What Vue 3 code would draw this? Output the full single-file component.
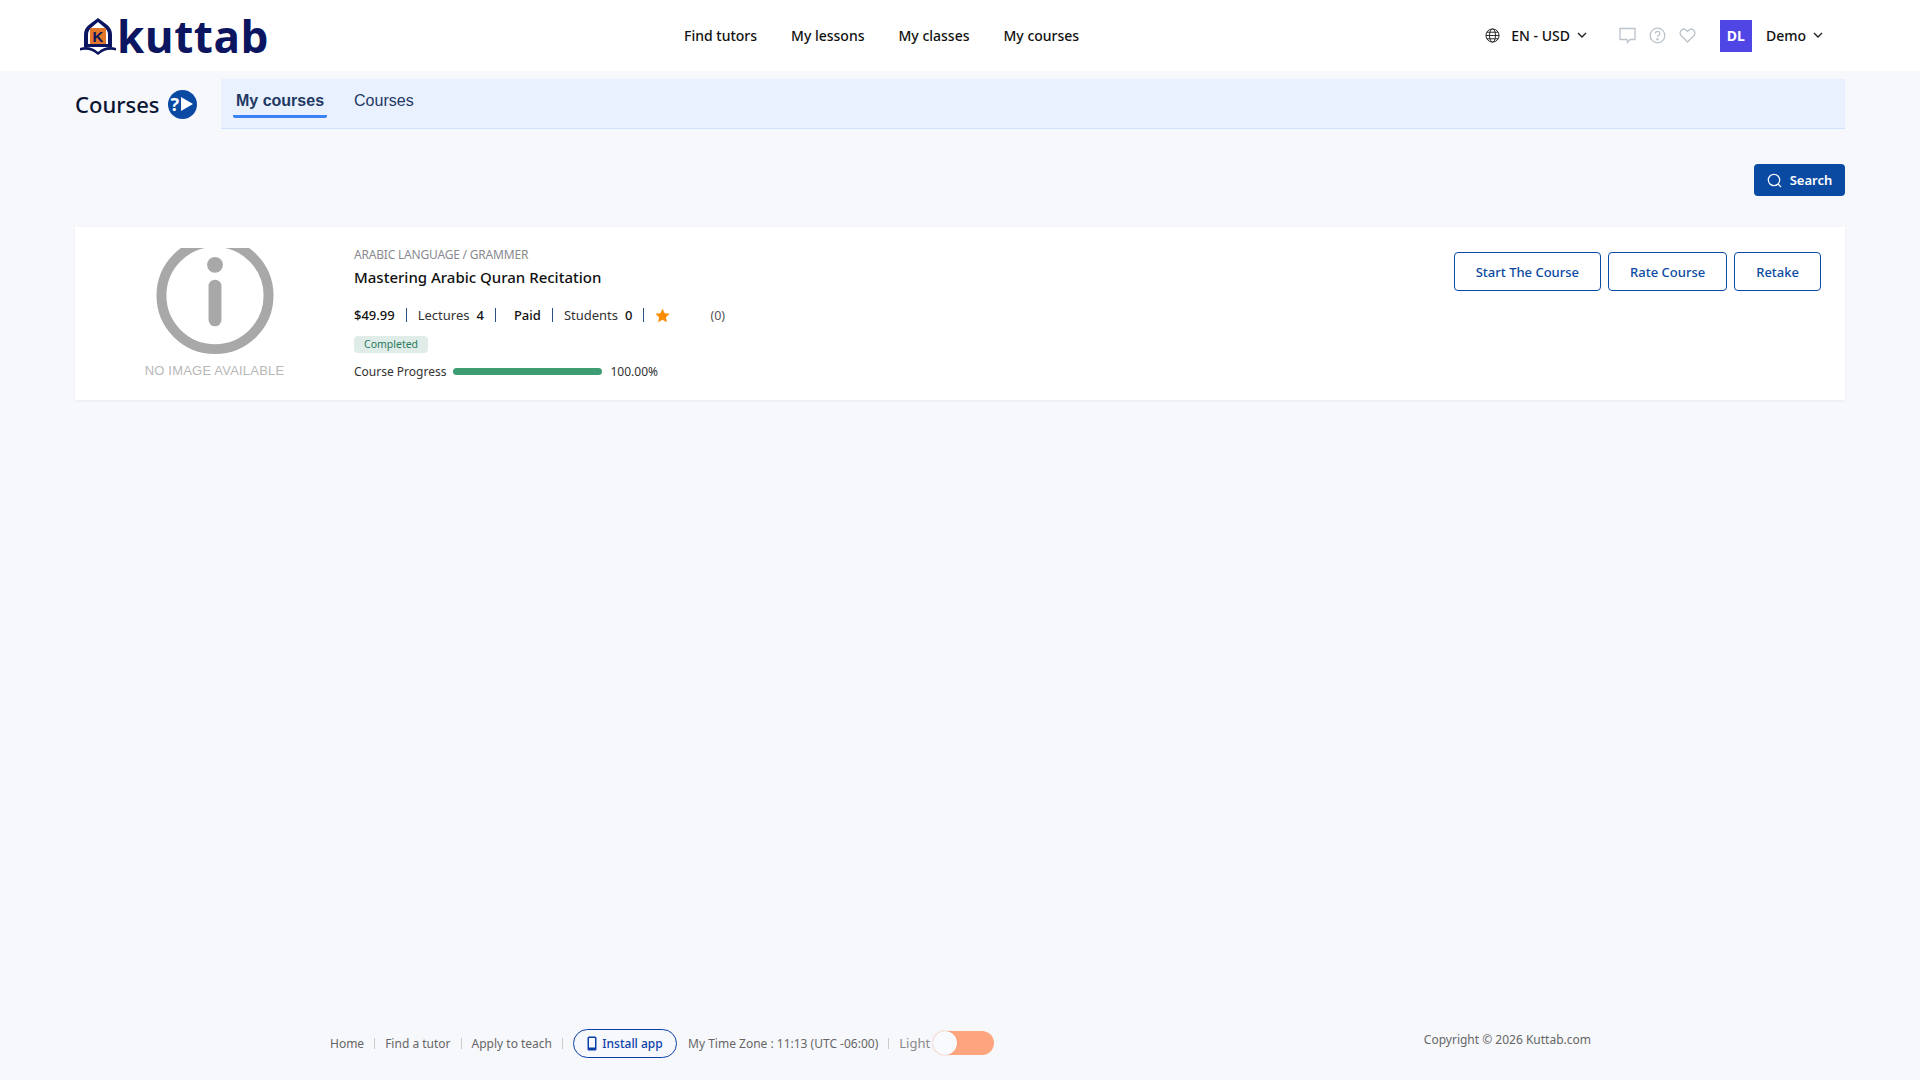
<template>
  <div class="page">
    <header class="topbar">
      <a class="logo">
        <svg width="40" height="40" viewBox="0 0 40 40">
          <path d="M20 2 L28 8 Q34 12 34 19 L34 31 L6 31 L6 19 Q6 12 12 8 Z" fill="#0b1560" />
          <path d="M20 6 L26 11 Q30 14 30 19 L30 28 L10 28 L10 19 Q10 14 14 11 Z" fill="#fff" />
          <rect x="12" y="12" width="16" height="16" fill="#e2772b" />
          <text x="20" y="26" text-anchor="middle" class="logo-k">K</text>
          <path d="M2 32 Q12 29 20 36 Q28 29 38 32 L38 34.5 Q28 32 20 39 Q12 32 2 34.5 Z" fill="#0b1560" />
        </svg>
        <span class="logo-text">kuttab</span>
      </a>
      <nav class="nav">
        <a>Find tutors</a>
        <a>My lessons</a>
        <a>My classes</a>
        <a>My courses</a>
      </nav>
      <div class="right">
        <svg class="globe" width="15" height="15" viewBox="0 0 16 16" fill="none" stroke="#222" stroke-width="1">
          <circle cx="8" cy="8" r="7" />
          <ellipse cx="8" cy="8" rx="3.2" ry="7" />
          <path d="M1 8h14M2 4.5h12M2 11.5h12" />
        </svg>
        <span class="lang">EN - USD</span>
        <svg class="chev" width="10" height="7" viewBox="0 0 10 7" fill="none" stroke="#222" stroke-width="1.4"><path d="M1 1l4 4 4-4" /></svg>
        <div class="icons">
          <svg width="17" height="17" viewBox="0 0 17 17" fill="none" stroke="#bcc3ca" stroke-width="1.3"><path d="M1 1.5h15v11h-5l-2.5 3-.5-3H1z" /></svg>
          <svg width="17" height="17" viewBox="0 0 17 17" fill="none" stroke="#bcc3ca" stroke-width="1.3">
            <circle cx="8.5" cy="8.5" r="7.3" />
            <path d="M6.3 6.6c0-3 4.5-3 4.5-.2 0 1.800-2.300 1.700-2.300 3.600" />
            <circle cx="8.5" cy="12.300" r=".6" />
          </svg>
          <svg width="17" height="17" viewBox="0 0 17 17" fill="none" stroke="#bcc3ca" stroke-width="1.3"><path d="M8.500 15L2 8.500C-.5 5 3.500 .5 6.500 2.700L8.500 4.300l2-1.600C13.500 .5 17.500 5 15 8.500z" /></svg>
        </div>
        <div class="avatar">DL</div>
        <span class="user">Demo</span>
        <svg class="chev" width="10" height="7" viewBox="0 0 10 7" fill="none" stroke="#222" stroke-width="1.4"><path d="M1 1l4 4 4-4" /></svg>
      </div>
    </header>

    <section class="subhead">
      <div class="title">
        <h1>Courses</h1>
        <span class="help">
          <span>?</span>
          <svg width="14" height="16" viewBox="0 0 14 16"><path d="M1 1l12 7-12 7z" fill="#fff" /></svg>
        </span>
      </div>
      <ul class="tabs">
        <li v-for="(tab, idx) in tabs" :key="tab" :class="{ active: idx === 0 }">{{ tab }}</li>
      </ul>
    </section>

    <div class="toolbar">
      <button class="search">
        <svg width="15" height="15" viewBox="0 0 15 15" fill="none" stroke="#fff" stroke-width="1.2"><circle cx="7" cy="7" r="5.700" /><path d="M11 11l3 3" /></svg>
        Search
      </button>
    </div>

    <article class="card">
      <div class="thumb">
        <svg width="120" height="118" viewBox="0 0 120 118">
          <circle cx="60" cy="48" r="54" fill="none" stroke="#a8a8a8" stroke-width="10" />
          <circle cx="60" cy="17" r="8" fill="#a8a8a8" />
          <rect x="53.500" y="32" width="13" height="47" rx="6.500" fill="#a8a8a8" />
        </svg>
        <span class="noimg">NO IMAGE AVAILABLE</span>
      </div>
      <div class="info">
        <div class="cat">ARABIC LANGUAGE / GRAMMER</div>
        <h2>Mastering Arabic Quran Recitation</h2>
        <div class="meta">
          <b class="price">$49.99</b><i></i>
          <span>Lectures</span><b class="count">4</b><i></i>
          <b class="paid">Paid</b><i></i>
          <span>Students</span><b class="count">0</b><i></i>
          <svg class="star" width="15" height="15" viewBox="0 0 24 24"><path d="M12 1l3.400 7.300 7.900 1-5.800 5.500 1.500 7.900L12 18.800 5 22.700l1.500-7.900L.7 9.300l7.900-1z" fill="#fb8c00" /></svg>
          <span class="reviews">(0)</span>
        </div>
        <span class="badge">Completed</span>
        <div class="progress">
          <span>Course Progress</span>
          <div class="bar"><div class="fill" :style="{ width: progress + '%' }"></div></div>
          <span class="pct">{{ progress.toFixed(2) }}%</span>
        </div>
      </div>
      <div class="actions">
        <button v-for="label in actions" :key="label">{{ label }}</button>
      </div>
    </article>

    <footer class="footer">
      <div class="links">
        <a>Home</a><i></i>
        <a>Find a tutor</a><i></i>
        <a>Apply to teach</a><i></i>
        <button class="install">
          <svg width="10" height="15" viewBox="0 0 10 15"><path d="M2 .5h6A1.500 1.500 0 0 1 9.500 2v11A1.500 1.500 0 0 1 8 14.500H2A1.500 1.500 0 0 1 .5 13V2A1.500 1.500 0 0 1 2 .5zM2 2v9.500h6V2z" fill="#0b3fa8" /></svg>
          Install app
        </button>
        <span class="tz">My Time Zone : 11:13 (UTC -06:00)</span><i></i>
        <span class="mode">Light</span>
        <span class="toggle"><span class="knob"></span></span>
      </div>
      <span class="copy">Copyright © 2026 Kuttab.com</span>
    </footer>
  </div>
</template>

<script setup>
const tabs = ['My courses', 'Courses']
const actions = ['Start The Course', 'Rate Course', 'Retake']
const progress = 100
</script>

<style>
body {
  margin: 0;
  background: #f7f8fc;
}
</style>

<style scoped>
.page {
  display: flex;
  flex-direction: column;
  height: 1080px;
  overflow: hidden;
  font-family: "Noto Sans", "Open Sans", sans-serif;
  color: #111;
  background: #f7f8fc;
}

.topbar {
  display: flex;
  align-items: center;
  height: 71px;
  padding: 0 75px 0 78px;
  background: #fff;
  box-sizing: border-box;
}

.logo {
  display: flex;
  align-items: center;
  width: 606px;
}

.logo-k {
  font: 700 15px "Liberation Sans", sans-serif;
  fill: #0b1560;
}

.logo-text {
  margin-left: -1px;
  font: 700 44px/50px "Open Sans", sans-serif;
  letter-spacing: .5px;
  color: #0b1560;
}

.nav {
  display: flex;
  gap: 34px;
  font-size: 14px;
  font-weight: 500;
}

.right {
  display: flex;
  align-items: center;
  margin-left: auto;
  margin-right: 22px;
  font-size: 14px;
  font-weight: 500;
}

.lang {
  margin-left: 11px;
}

.chev {
  margin-left: 7px;
}

.icons {
  display: flex;
  gap: 13px;
  margin: 0 24px 0 32px;
}

.avatar {
  display: flex;
  align-items: center;
  justify-content: center;
  width: 32px;
  height: 32px;
  color: #fff;
  font-weight: 700;
  font-size: 14px;
  background: #5046e5;
}

.user {
  margin-left: 14px;
}

.subhead {
  display: flex;
  gap: 24px;
  margin: 8px 75px 0;
}

.title {
  display: flex;
  align-items: center;
  gap: 8px;
  width: 122px;
}

.title h1 {
  margin: 0;
  font-size: 22px;
  font-weight: 500;
  color: #0b1533;
}

.help {
  display: flex;
  align-items: center;
  justify-content: center;
  gap: 1px;
  width: 35px;
  height: 29px;
  border-radius: 15px;
  color: #fff;
  font-size: 18px;
  font-weight: 700;
  background: #0b4aa2;
}

.tabs {
  display: flex;
  flex: 1;
  gap: 24px;
  height: 50px;
  margin: 0;
  padding: 0 0 0 12px;
  list-style: none;
  box-sizing: border-box;
  border-bottom: 1px solid #cfe2ff;
  font: 16px "Liberation Sans", sans-serif;
  color: #1f3864;
  background: #e8f1fd;
}

.tabs li {
  height: 39px;
  padding: 13px 3px 0;
  box-sizing: border-box;
}

.tabs li.active {
  font-weight: 700;
  border-bottom: 3px solid #3b82f6;
  border-radius: 0 0 2px 2px;
}

.toolbar {
  display: flex;
  justify-content: flex-end;
  margin: 35px 75px 31px;
}

button {
  font-family: inherit;
  cursor: pointer;
}

.search {
  display: flex;
  align-items: center;
  justify-content: center;
  gap: 8px;
  width: 91px;
  height: 32px;
  padding: 0;
  border: 0;
  border-radius: 4px;
  color: #fff;
  font-size: 13px;
  font-weight: 600;
  background: #0b4aa2;
}

.card {
  display: flex;
  height: 173px;
  margin: 0 75px;
  box-sizing: border-box;
  background: #fff;
  box-shadow: 0 1px 3px rgba(20, 40, 80, .06);
}

.thumb {
  display: flex;
  flex-direction: column;
  align-items: center;
  height: 130px;
  width: 279px;
  margin-top: 21px;
  overflow: hidden;
}

.noimg {
  margin-top: -2px;
  font: 13px "Liberation Sans", sans-serif;
  line-height: 15px;
  letter-spacing: .2px;
  color: #b8b8b8;
  white-space: nowrap;
}

.info {
  display: flex;
  flex-direction: column;
  align-items: flex-start;
  padding-top: 19px;
}

.cat {
  font-size: 12px;
  line-height: 17px;
  letter-spacing: -.2px;
  color: #8a8a90;
}

.info h2 {
  margin: 4px 0 0;
  font-size: 15px;
  line-height: 21px;
  font-weight: 500;
}

.meta {
  display: flex;
  align-items: center;
  height: 18px;
  margin-top: 18px;
  font-size: 13px;
  color: #333;
}

.meta b {
  font-weight: 500;
  color: #111;
}

.meta i {
  width: 1px;
  height: 14px;
  margin: 0 11px;
  background: #2b4f7e;
}

.count {
  margin-left: 7px;
}

.paid {
  margin-left: 7px;
}

.reviews {
  margin-left: 40px;
  font-size: 12.500px;
  color: #555;
}

.badge {
  margin-top: 12px;
  padding: 0 10px;
  height: 17px;
  line-height: 17px;
  border-radius: 4px;
  font-size: 10.500px;
  color: #2a7a5e;
  background: #dfece7;
}

.progress {
  display: flex;
  align-items: center;
  margin-top: 10px;
  font-size: 12px;
  color: #333;
}

.bar {
  width: 149px;
  height: 7px;
  margin: 0 8px 0 7px;
  border-radius: 4px;
  overflow: hidden;
  background: #e6e6e6;
}

.fill {
  height: 100%;
  background: #3d9c72;
}

.actions {
  display: flex;
  gap: 7px;
  margin: 25px 24px 0 auto;
  height: 39px;
}

.actions button {
  padding: 0 21px;
  border: 1px solid #0b4aa2;
  border-radius: 4px;
  font-size: 13px;
  font-weight: 500;
  color: #0b4aa2;
  background: #fff;
}

.footer {
  display: flex;
  align-items: center;
  justify-content: space-between;
  margin-top: auto;
  height: 60px;
  padding: 0 329px 14px 330px;
  box-sizing: border-box;
  font-size: 12px;
  color: #666;
}

.links {
  display: flex;
  align-items: center;
}

.links i {
  width: 1px;
  height: 11px;
  margin: 0 10px;
  background: #ccc;
}

.install {
  display: flex;
  align-items: center;
  justify-content: center;
  gap: 5px;
  width: 104px;
  height: 29px;
  padding: 0;
  border: 1px solid #0b3fa8;
  border-radius: 15px;
  font-size: 12px;
  font-weight: 500;
  color: #0b3fa8;
  background: transparent;
}

.tz {
  margin-left: 11px;
}

.mode {
  font-size: 13px;
  color: #888;
}

.toggle {
  display: flex;
  width: 61px;
  height: 24px;
  margin-left: 3px;
  border-radius: 12px;
  background: #fca57e;
}

.knob {
  width: 24px;
  height: 24px;
  border-radius: 50%;
  background: #f9fafd;
  box-shadow: 0 0 2px rgba(240, 130, 90, .5);
}

.copy {
  margin-bottom: 8px;
}
</style>
